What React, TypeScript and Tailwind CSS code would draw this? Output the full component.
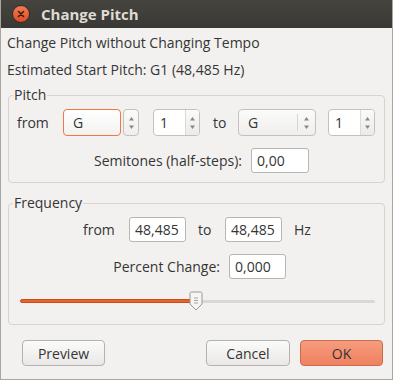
import React from "react";

const font = { fontFamily: '"Open Sans", "DejaVu Sans", sans-serif' };

function Arrows() {
  return (
    <svg width="7" height="14" viewBox="0 0 7 14" className="text-[#8a8784]">
      <path d="M3.5 1 L6 4.5 L1 4.5 Z" fill="currentColor" />
      <path d="M3.5 13 L6 9.5 L1 9.5 Z" fill="currentColor" />
    </svg>
  );
}

function Combo({ w, focus }: { w: string; focus?: boolean }) {
  if (focus) {
    return (
      <div className="flex items-center gap-[2px]">
        <div className={`${w} h-[27px] rounded-[4px] border border-[#f07746] bg-gradient-to-b from-[#ffffff] to-[#f3f2f1] flex items-center pl-[9px]`}>
          G
        </div>
        <div className="w-[16px] h-[27px] rounded-[4px] border border-[#c4c1bd] bg-gradient-to-b from-[#fbfbfa] to-[#efeeec] flex items-center justify-center">
          <Arrows />
        </div>
      </div>
    );
  }
  return (
    <div className={`${w} h-[27px] rounded-[4px] border border-[#c4c1bd] bg-gradient-to-b from-[#fbfbfa] to-[#efeeec] flex items-center`}>
      <span className="flex-1 pl-[9px]">G</span>
      <span className="h-[17px] border-l border-[#d8d5d2] w-[18px] flex items-center justify-center">
        <Arrows />
      </span>
    </div>
  );
}

function Spin() {
  return (
    <div className="w-[47px] h-[27px] rounded-[4px] border border-[#c4c1bd] bg-white flex items-center">
      <span className="flex-1 pl-[6px]">1</span>
      <span className="h-[25px] w-[14px] border-l border-[#dcd9d6] bg-gradient-to-b from-[#fbfbfa] to-[#ebeae8] rounded-r-[3px] flex items-center justify-center">
        <Arrows />
      </span>
    </div>
  );
}

function Field({ w, value }: { w: string; value: string }) {
  return (
    <div className={`${w} h-[25px] rounded-[3px] border border-[#b8b5b2] bg-white flex items-center pl-[5px] shrink-0`}>
      {value}
    </div>
  );
}

function Group({ title, className, children }: { title: string; className: string; children: React.ReactNode }) {
  return (
    <div className={`relative mx-[7px] border border-[#d6d3d0] rounded-[4px] ${className}`}>
      <span className="absolute left-[4px] top-[-10px] bg-[#f2f1f0] px-[1px] leading-[18px]">{title}</span>
      {children}
    </div>
  );
}

export default function App() {
  return (
    <div className="w-[393px] h-[380px] bg-[#f2f1f0] text-[14px] text-[#353535] flex flex-col border-x border-b border-[#a8a6a3]" style={font}>
      <div className="h-[28px] bg-gradient-to-b from-[#45443f] to-[#3a3935] flex items-center pl-[11px] gap-[11px] shrink-0">
        <div className="w-[18px] h-[18px] rounded-full bg-gradient-to-b from-[#f37c4f] to-[#dc4a1f] border border-[#2f2e2b] flex items-center justify-center">
          <svg width="8" height="8" viewBox="0 0 8 8">
            <path d="M1.5 1.5 L6.5 6.5 M6.5 1.5 L1.5 6.5" stroke="#3a1a10" strokeWidth="1.6" strokeLinecap="round" />
          </svg>
        </div>
        <span className="text-[15px] font-bold text-[#dfdbd2]">Change Pitch</span>
      </div>

      <div className="pl-[6px] pt-[6px] leading-[18px]">Change Pitch without Changing Tempo</div>
      <div className="pl-[6px] pt-[9px] leading-[18px]">Estimated Start Pitch: G1 (48,485 Hz)</div>

      <Group title="Pitch" className="mt-[16px] h-[88px] pt-[13px]">
        <div className="flex items-center pl-[8px]">
          <span className="w-[46px]">from</span>
          <Combo w="w-[58px]" focus />
          <span className="w-[14px]" />
          <Spin />
          <span className="w-[38px] pl-[13px]">to</span>
          <Combo w="w-[78px]" />
          <span className="w-[12px]" />
          <Spin />
        </div>
        <div className="flex items-center mt-[12px] pl-[70px]">
          <span className="w-[172px] pr-[9px] text-right whitespace-nowrap">Semitones (half-steps):</span>
          <Field w="w-[58px]" value="0,00" />
        </div>
      </Group>

      <Group title="Frequency" className="mt-[20px] h-[122px] pt-[13px]">
        <div className="flex items-center pl-[74px]">
          <span className="w-[46px]">from</span>
          <Field w="w-[57px]" value="48,485" />
          <span className="w-[39px] pl-[12px]">to</span>
          <Field w="w-[57px]" value="48,485" />
          <span className="pl-[12px]">Hz</span>
        </div>
        <div className="flex items-center mt-[12px] pl-[92px]">
          <span className="w-[128px] pr-[9px] text-right whitespace-nowrap">Percent Change:</span>
          <Field w="w-[57px]" value="0,000" />
        </div>
        <div className="relative ml-[11px] mr-[9px] mt-[14px] h-[16px] flex items-center">
          <div className="w-full h-[3px] rounded-full bg-[#dad7d4]" />
          <div className="absolute left-0 w-[178px] h-[4px] rounded-full bg-[#e9622d] border border-[#c9501f]" />
          <svg className="absolute left-[168px] top-[-2px]" width="16" height="20" viewBox="0 0 16 20">
            <path d="M2 2.5 Q2 1 3.5 1 L12.5 1 Q14 1 14 2.5 L14 13 L8 19 L2 13 Z" fill="#f6f5f4" stroke="#9a9794" strokeWidth="1" />
            <path d="M6 7 H10 M6 9.5 H10 M6 12 H10" stroke="#a9a6a3" strokeWidth="1" />
          </svg>
        </div>
      </Group>

      <div className="flex items-center pl-[21px] pr-[9px] mt-[15px]">
        <button className="w-[83px] h-[26px] rounded-[4px] border border-[#b5b2ae] bg-gradient-to-b from-[#fbfbfa] to-[#e9e8e6]">Preview</button>
        <div className="flex-1" />
        <button className="w-[84px] h-[26px] rounded-[4px] border border-[#b5b2ae] bg-gradient-to-b from-[#fbfbfa] to-[#e9e8e6]">Cancel</button>
        <button className="w-[83px] h-[26px] ml-[10px] rounded-[4px] border border-[#c96d4c] bg-gradient-to-b from-[#f69c7e] to-[#ef8160]">OK</button>
      </div>
    </div>
  );
}
